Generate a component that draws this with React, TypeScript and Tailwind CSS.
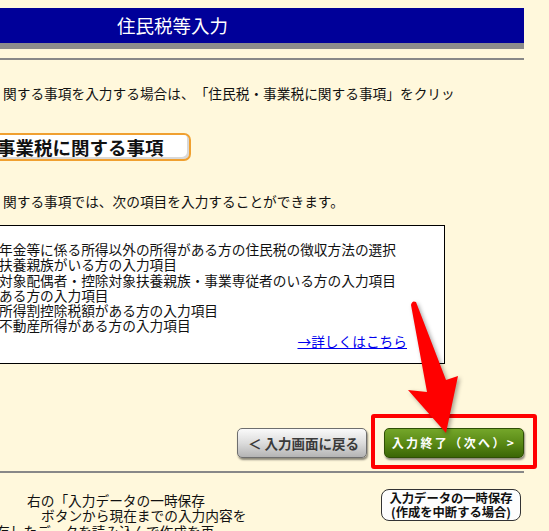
export default function App() {
  const items = [
    '年金等に係る所得以外の所得がある方の住民税の徴収方法の選択',
    '扶養親族がいる方の入力項目',
    '対象配偶者・控除対象扶養親族・事業専従者のいる方の入力項目',
    'ある方の入力項目',
    '所得割控除税額がある方の入力項目',
    '不動産所得がある方の入力項目',
  ];

  return (
    <div className="relative h-[531px] w-[549px] overflow-hidden bg-[#fff8dc] font-['Noto_Sans_CJK_JP',sans-serif] text-[#111] [text-spacing-trim:space-all]">
      <div className="w-[524px] pt-[8px]">
        {/* title bar */}
        <div className="flex h-[35px] items-center bg-[#000099] pl-[117px] text-[18.5px] leading-none text-white">
          住民税等入力
        </div>
        <div className="h-[6px] bg-[#8c8c8c]" />
        <div className="mt-[9px] h-[2px] bg-[#888]" />

        <p className="mt-[25px] whitespace-nowrap pl-[3px] text-[13.7px] leading-[16px]">
          関する事項を入力する場合は、「住民税・事業税に関する事項」をクリッ
        </p>

        {/* section heading */}
        <div className="mt-[32px] -ml-[20px] flex h-[28px] w-[211px] items-center rounded-r-[7px] border-2 border-[#f0a030] bg-white pl-[15px] shadow-[inset_-2px_-2px_0_#d8d8d8]">
          <span className="whitespace-nowrap text-[18.5px] font-bold leading-none">事業税に関する事項</span>
        </div>

        <p className="mt-[32px] whitespace-nowrap pl-[3px] text-[13.7px] leading-[16px]">
          関する事項では、次の項目を入力することができます。
        </p>

        {/* item box */}
        <div className="mt-[16px] -ml-[10px] h-[139px] w-[455px] border border-black bg-white pt-[16px] pl-[8px] pr-[37px] text-[13.7px] leading-[15.3px]">
          {items.map((t) => (
            <div key={t} className="whitespace-nowrap">
              {t}
            </div>
          ))}
          <div className="text-right">
            <a href="#" className="text-[#0000ee] underline">
              →詳しくはこちら
            </a>
          </div>
        </div>

        {/* navigation buttons */}
        <div className="mt-[64px] flex justify-end gap-[17px]">
          <button
            type="button"
            className="flex h-[30px] w-[130px] items-center rounded-[5px] border border-[#6e6e6e] bg-gradient-to-b from-[#fafafa] via-[#dcdcdc] to-[#b4b4b4] pl-[10px] text-[13.5px] font-bold whitespace-nowrap text-[#3a3a3a] shadow-[1px_2px_2px_rgba(0,0,0,0.45)]"
          >
            ＜ 入力画面に戻る
          </button>
          <button
            type="button"
            className="flex h-[30px] w-[140px] items-center justify-center rounded-[5px] border border-[#2f4f05] bg-gradient-to-b from-[#74a62a] via-[#5a8a15] to-[#3b6606] text-[12px] font-bold tracking-[2.4px] whitespace-nowrap text-white shadow-[1px_2px_2px_rgba(0,0,0,0.45)]"
          >
            入力終了（次へ）&gt;
          </button>
        </div>

        <div className="mt-[13px] h-[2px] bg-[#888]" />

        {/* bottom note */}
        <div className="flex justify-between pt-[16px]">
          <div className="pt-[4px] text-[13.7px] leading-[15.3px]">
            <div className="whitespace-nowrap pl-[27px]">右の「入力データの一時保存</div>
            <div className="whitespace-nowrap pl-[41px]">ボタンから現在までの入力内容を</div>
            <div className="-ml-[4px] whitespace-nowrap">存したデータを読み込んで作成を再</div>
          </div>
          <button
            type="button"
            className="mr-[3px] flex h-[32px] w-[140px] flex-col items-center justify-center rounded-[8px] border border-[#333] bg-[#fdfdfd] text-[12.3px] font-bold leading-[14px] whitespace-nowrap text-[#111]"
          >
            <span>入力データの一時保存</span>
            <span>(作成を中断する場合)</span>
          </button>
        </div>
      </div>

      {/* annotation: red frame */}
      <div className="absolute left-[371px] top-[414px] h-[55px] w-[166px] rounded-[3px] border-[4px] border-[#ff0000]" />

      {/* annotation: red arrow */}
      <svg
        className="absolute left-[400px] top-[290px] drop-shadow-[2px_2px_2px_rgba(0,0,0,0.35)]"
        width="70"
        height="150"
        viewBox="0 0 70 150"
      >
        <path
          d="M11 15 Q12 10 16 12 L46 90 L58 86 L46 143 L8 100 L27 102 Z"
          fill="#ff0000"
        />
      </svg>
    </div>
  );
}
